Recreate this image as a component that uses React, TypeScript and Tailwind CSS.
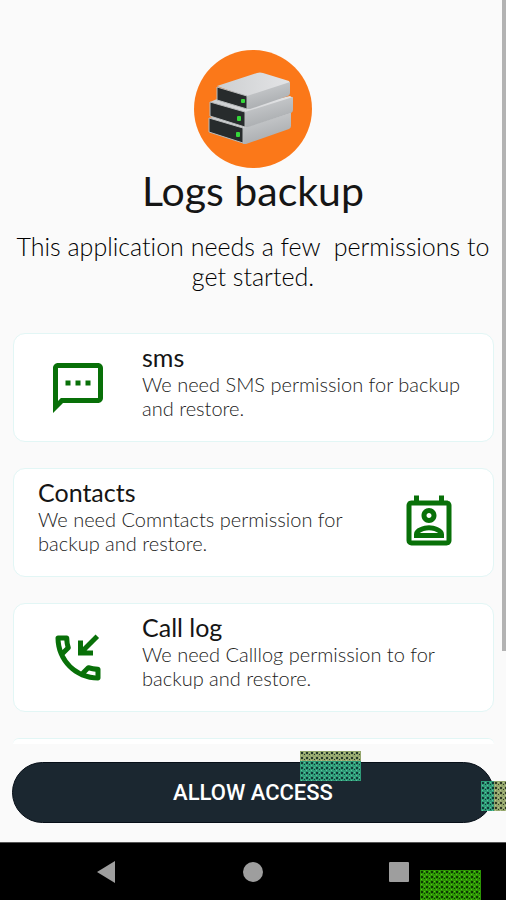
import type { ReactNode } from "react";
import { MdOutlinePermContactCalendar, MdOutlinePhoneCallback, MdOutlineSms } from "react-icons/md";

type Permission = {
  title: string;
  description: string;
  icon: ReactNode;
  iconSide: "left" | "right";
};

const permissions: Permission[] = [
  {
    title: "sms",
    description: "We need SMS permission for backup and restore.",
    icon: <MdOutlineSms size={60} />,
    iconSide: "left",
  },
  {
    title: "Contacts",
    description: "We need Comntacts permission for backup and restore.",
    icon: <MdOutlinePermContactCalendar size={60} />,
    iconSide: "right",
  },
  {
    title: "Call log",
    description: "We need Calllog permission to for backup and restore.",
    icon: <MdOutlinePhoneCallback size={60} />,
    iconSide: "left",
  },
];

function Logo() {
  return (
    <svg viewBox="0 0 118 118" className="size-[118px]" role="img" aria-label="Logs backup logo">
      <defs>
        <linearGradient id="side" x1="0" y1="0" x2="0.4" y2="1">
          <stop stopColor="#cfd1d3" />
          <stop offset="1" stopColor="#a9acaf" />
        </linearGradient>
        <linearGradient id="top" x1="0" y1="0" x2="1" y2="0">
          <stop stopColor="#cdcfd1" />
          <stop offset="1" stopColor="#e3e4e6" />
        </linearGradient>
      </defs>
      <circle cx="59" cy="59" r="59" fill="#fb7819" />

      <path d="M15 68 46 60 96 62 97 64 49 79Z" fill="url(#top)" />
      <path d="M49 78 97 63V76Q97 78 95 79L52 94 49 94Z" fill="url(#side)" />
      <path d="M15 68 49 78V93L15 82Z" fill="#272b2c" stroke="#b8bbbc" strokeLinejoin="round" />
      <rect x="42" y="82" width="4" height="5" rx="1" fill="#35d83a" />

      <path d="M16 52 23 49 53 56 96 46 99 48 51 63Z" fill="url(#top)" />
      <path d="M51 62 99 47V60Q99 62 97 63L54 77 51 77Z" fill="url(#side)" />
      <path d="M16 52 51 62V77L16 66Z" fill="#272b2c" stroke="#b8bbbc" strokeLinejoin="round" />
      <rect x="43" y="66" width="4" height="5" rx="1" fill="#35d83a" />

      <path d="M23 36 63 23Q66 22 69 23L95 31 96 33 53 47Z" fill="url(#top)" />
      <path d="M53 46 96 32V43Q96 45 94 46L56 59 53 59Z" fill="url(#side)" />
      <path d="M23 37 53 46V59L23 50Z" fill="#272b2c" stroke="#b8bbbc" strokeLinejoin="round" />
      <rect x="47" y="49" width="4" height="4" rx="1" fill="#35d83a" />
    </svg>
  );
}

function PermissionCard({ title, description, icon, iconSide }: Permission) {
  const isLeft = iconSide === "left";

  return (
    <li
      className={`flex min-h-[109px] rounded-xl border border-[#e2f6f5] bg-white ${
        isLeft ? "flex-row" : "flex-row-reverse"
      }`}
    >
      <div className="flex w-32 shrink-0 items-center justify-center text-[#087008]">{icon}</div>
      <div className={`flex-1 pt-2 ${isLeft ? "pr-6" : "pl-6"}`}>
        <h2 className="text-[25px] leading-[30px] text-[#151515]">{title}</h2>
        <p className="text-xl leading-6 font-light text-[#222222]">{description}</p>
      </div>
    </li>
  );
}

type DitherProps = {
  id: string;
  className: string;
  fill: string;
  dots: string;
  light: string;
};

// Speckled block: dark squares on a coloured ground with lighter points between them
function Dither({ id, className, fill, dots, light }: DitherProps) {
  return (
    <svg className={className} aria-hidden="true">
      <defs>
        <pattern id={id} width="5" height="5" patternUnits="userSpaceOnUse">
          <rect width="5" height="5" fill={fill} />
          <rect x="1" y="1" width="2" height="2" fill={dots} />
          <rect x="4" y="3" width="1" height="1" fill={dots} />
          <rect x="4" y="1" width="1" height="1" fill={light} />
          <rect x="1" y="4" width="1" height="1" fill={light} />
        </pattern>
      </defs>
      <rect width="100%" height="100%" fill={`url(#${id})`} />
    </svg>
  );
}

export default function App() {
  return (
    <div className="relative flex min-h-screen flex-col overflow-hidden bg-[#fafafa] font-['Lato',sans-serif] [font-variant-ligatures:none]">
      <div className="absolute top-0 right-0 h-[651px] w-1 bg-[#b3b3b3]" />

      <main className="flex-1 px-3">
        <header className="flex flex-col items-center pt-[50px] text-center text-[#151515]">
          <Logo />
          <h1 className="text-[41px] leading-[46px]">Logs backup</h1>
          <p className="mt-[17px] text-[25px] leading-[30px] font-light whitespace-pre-wrap text-black">
            This application needs a few  permissions to get started.
          </p>
        </header>
        <ul className="mt-[42px] ml-px flex flex-col gap-[26px]">
          {permissions.map((permission) => (
            <PermissionCard key={permission.title} {...permission} />
          ))}
          <li className="h-[6px] rounded-t-xl border-t border-[#e2f6f5] bg-white" />
        </ul>
      </main>

      <div className="relative px-3 pt-[18px] pb-[19px]">
        <button
          type="button"
          className="h-[61px] w-full rounded-full border border-[#070f18] bg-[#1b2730] font-['Roboto',sans-serif] text-[22px] font-medium text-white"
        >
          ALLOW ACCESS
        </button>
        <div className="absolute top-[7px] right-[145px] flex w-[61px] flex-col">
          <Dither id="sand-top" className="h-[10px] w-full" fill="#94a56c" dots="#26382a" light="#b4c48a" />
          <Dither id="teal-top" className="h-5 w-full" fill="#2f9a78" dots="#103a38" light="#55c79b" />
        </div>
        <div className="absolute top-[37px] right-0 flex h-[30px]">
          <Dither id="teal-side" className="h-full w-[13px]" fill="#2f9a78" dots="#103a38" light="#55c79b" />
          <Dither id="sand-side" className="h-full w-3" fill="#94a56c" dots="#303a26" light="#b4c48a" />
        </div>
      </div>

      <nav
        aria-label="System"
        className="relative flex h-[58px] items-center justify-center gap-[122px] border-t border-[#555555] bg-black text-[#9e9e9e]"
      >
        <button type="button" aria-label="Back">
          <svg viewBox="0 0 24 24" className="size-6" fill="currentColor">
            <path d="M2 12 20 1V23Z" />
          </svg>
        </button>
        <button type="button" aria-label="Home">
          <svg viewBox="0 0 24 24" className="size-6" fill="currentColor">
            <circle cx="12" cy="12" r="10" />
          </svg>
        </button>
        <button type="button" aria-label="Recent apps">
          <svg viewBox="0 0 24 24" className="size-6" fill="currentColor">
            <rect x="2" y="2" width="20" height="20" rx="1" />
          </svg>
        </button>
        <Dither
          id="green"
          className="absolute right-[25px] bottom-0 h-[30px] w-[61px]"
          fill="#2b9404"
          dots="#0c3a02"
          light="#55c516"
        />
      </nav>
    </div>
  );
}
